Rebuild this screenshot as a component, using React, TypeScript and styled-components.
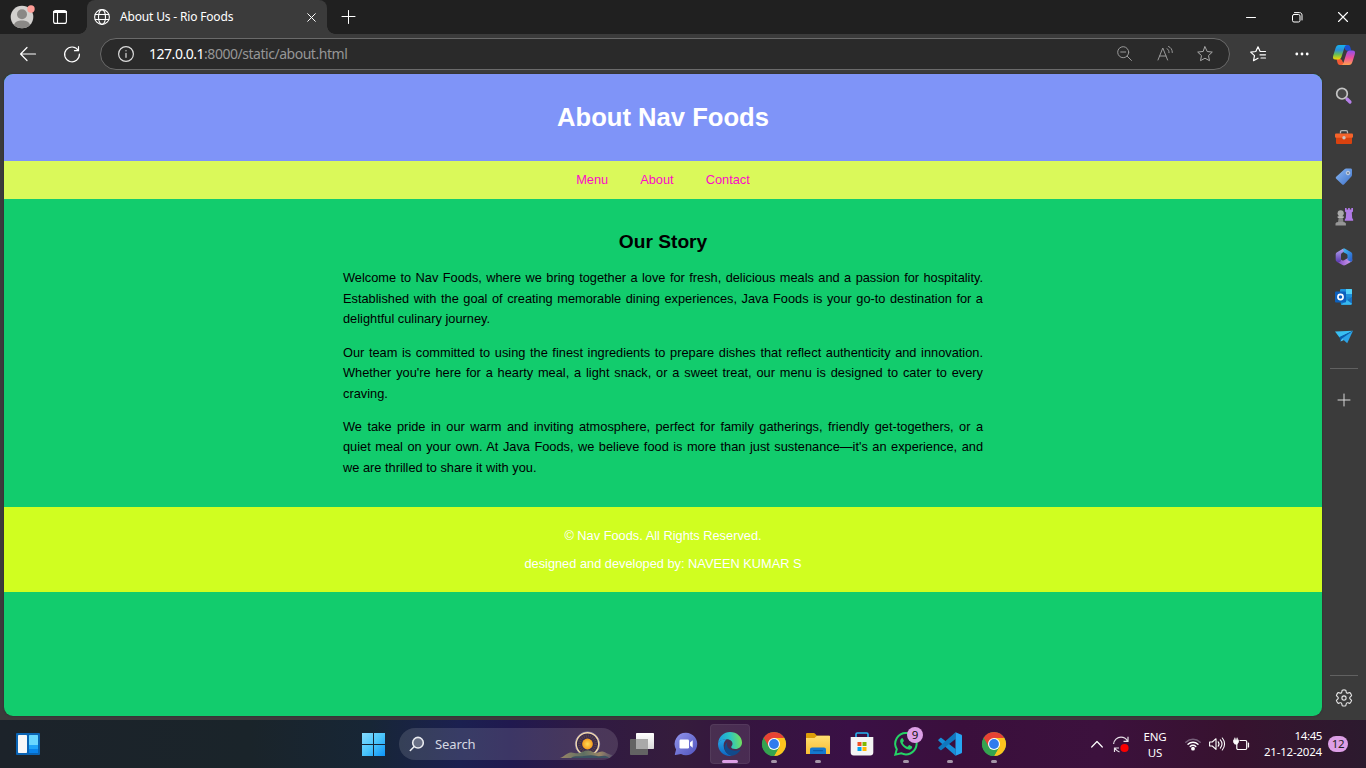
import React from "react";
import styled, { createGlobalStyle } from "styled-components";

const GlobalStyle = createGlobalStyle`
  *, *::before, *::after { box-sizing: border-box; }
  html, body { margin: 0; padding: 0; overflow: hidden; background: #3b3b3b; }
  svg { display: block; flex: none; overflow: visible; }
`;

const uiFont = `"Noto Sans", "Open Sans", sans-serif`;

const Screen = styled.div`
  width: 1366px;
  height: 768px;
  display: flex;
  flex-direction: column;
  background: #3b3b3b;
  color: #fff;
  font-family: ${uiFont};
  overflow: hidden;
`;

/* ---------- window frame ---------- */

const TitleBar = styled.div`
  height: 34px;
  flex: none;
  display: flex;
  align-items: stretch;
  background: #202020;
`;

const Slot = styled.div<{ $w: number; $color?: string }>`
  width: ${(p) => p.$w}px;
  flex: none;
  display: flex;
  align-items: center;
  justify-content: center;
  color: ${(p) => p.$color || "#fff"};
`;

const Tab = styled.div`
  position: relative;
  width: 240px;
  flex: none;
  display: flex;
  align-items: center;
  padding: 0 8px 0 7px;
  background: #3b3b3b;
  border-radius: 8px 8px 0 0;
  &::before,
  &::after {
    content: "";
    position: absolute;
    bottom: 0;
    width: 8px;
    height: 8px;
  }
  &::before {
    left: -8px;
    background: radial-gradient(circle at 0 0, transparent 7.5px, #3b3b3b 8px);
  }
  &::after {
    right: -8px;
    background: radial-gradient(circle at 100% 0, transparent 7.5px, #3b3b3b 8px);
  }
`;

const TabTitle = styled.span`
  flex: 1;
  margin-left: 10px;
  font-size: 12px;
  letter-spacing: -0.17px;
  line-height: 16px;
  white-space: nowrap;
`;

const Spacer = styled.div`
  flex: 1;
`;

const Body = styled.div`
  flex: 1;
  min-height: 0;
  display: flex;
`;

const Main = styled.div`
  width: 1322px;
  display: flex;
  flex-direction: column;
`;

const Toolbar = styled.div`
  height: 40px;
  flex: none;
  display: flex;
  align-items: center;
  padding-left: 6px;
`;

const AddressBar = styled.div`
  width: 1130px;
  height: 32px;
  flex: none;
  margin-left: 6px;
  margin-right: 6px;
  display: flex;
  align-items: center;
  padding: 0 4px 0 5px;
  background: #2a2a2a;
  border: 1px solid #6a6a6a;
  border-radius: 16px;
`;

const Url = styled.span`
  flex: 1;
  margin-left: 3px;
  font-size: 14px;
  letter-spacing: -0.47px;
  line-height: 20px;
  color: #969696;
  white-space: nowrap;
  b {
    font-weight: 400;
    color: #fff;
  }
`;

const Sidebar = styled.div`
  width: 44px;
  flex: none;
  display: flex;
  flex-direction: column;
  align-items: center;
`;

const SideItem = styled.div<{ $h?: number }>`
  width: 44px;
  height: ${(p) => p.$h || 40}px;
  flex: none;
  display: flex;
  align-items: center;
  justify-content: center;
`;

const SideRule = styled.div`
  width: 28px;
  height: 1px;
  flex: none;
  background: #616161;
`;

/* ---------- web page ---------- */

const Page = styled.div`
  margin: 0 0 4px 4px;
  flex: 1;
  display: flex;
  flex-direction: column;
  background: #12cc6d;
  border-radius: 9px;
  overflow: hidden;
  font-family: "Liberation Sans", Arial, sans-serif;
  font-size: 12.8px;
  line-height: 20.48px;
  color: #000;
  box-shadow: 0 0 2px #2a2a2a;
`;

const PageHeader = styled.header`
  height: 87px;
  display: flex;
  align-items: center;
  justify-content: center;
  background: #7f94f8;
  h1 {
    margin: 0;
    font-size: 25.6px;
    line-height: 41px;
    color: #fff;
  }
`;

const PageNav = styled.nav`
  height: 38px;
  display: flex;
  align-items: center;
  justify-content: center;
  gap: 32px;
  background: #daf95a;
  a {
    color: #fb0ac8;
  }
`;

const Article = styled.main`
  height: 308px;
  width: 640px;
  margin: 0 auto;
  padding-top: 27.6px;
  h2 {
    margin: 0 0 11.2px;
    font-size: 19.2px;
    line-height: 30.7px;
    text-align: center;
  }
  p {
    margin: 0 0 12.8px;
    text-align: justify;
  }
`;

const PageFooter = styled.footer`
  height: 85px;
  display: flex;
  flex-direction: column;
  align-items: center;
  justify-content: center;
  gap: 7.6px;
  padding-top: 2px;
  background: #d0fe20;
  color: #fff;
`;

/* ---------- taskbar ---------- */

const Taskbar = styled.div`
  height: 48px;
  flex: none;
  display: flex;
  align-items: stretch;
  background: linear-gradient(
    90deg,
    #1c232a 0,
    #1a242a 250px,
    #172636 370px,
    #1b2050 460px,
    #20194f 510px,
    #301a42 590px,
    #351c3c 680px,
    #35153f 740px,
    #3a1045 850px,
    #3a0f3c 960px,
    #3c113d 1100px,
    #37122f 1230px,
    #2c1a2e 1366px
  );
`;

const SearchBox = styled.div`
  width: 219px;
  height: 32px;
  margin: 8px 2px 8px 3px;
  flex: none;
  display: flex;
  align-items: center;
  padding-left: 10px;
  padding-right: 5px;
  border-radius: 16px;
  background: rgba(255, 255, 255, 0.13);
  font-size: 13px;
  color: #d5d8e2;
  overflow: hidden;
  span {
    flex: 1;
    margin-left: 10px;
    letter-spacing: -0.1px;
  }
`;

const AppTile = styled.div<{ $active?: boolean }>`
  position: relative;
  width: 40px;
  height: 40px;
  margin: 4px 2px;
  flex: none;
  display: flex;
  align-items: center;
  justify-content: center;
  border-radius: 4px;
  background: ${(p) => (p.$active ? "rgba(255,255,255,.1)" : "transparent")};
  border: 1px solid ${(p) => (p.$active ? "rgba(255,255,255,.06)" : "transparent")};
`;

const Running = styled.i<{ $active?: boolean }>`
  position: absolute;
  left: 50%;
  bottom: 0;
  width: ${(p) => (p.$active ? 16 : 6)}px;
  height: 3px;
  transform: translateX(-50%);
  border-radius: 2px;
  background: ${(p) => (p.$active ? "#dd9fe6" : "#a596a8")};
`;

const Badge = styled.span`
  position: absolute;
  top: 2px;
  right: 2px;
  width: 16px;
  height: 16px;
  border-radius: 8px;
  background: #dd9fe6;
  color: #111;
  font-size: 11.5px;
  line-height: 16px;
  text-align: center;
`;

const Language = styled.div`
  width: 44px;
  margin-right: 4px;
  display: flex;
  flex-direction: column;
  justify-content: center;
  padding-top: 1px;
  text-align: center;
  font-size: 11.5px;
  letter-spacing: -0.1px;
  line-height: 16px;
`;

const Clock = styled.div`
  width: 69px;
  display: flex;
  flex-direction: column;
  justify-content: center;
  text-align: right;
  white-space: nowrap;
  font-size: 11.5px;
  letter-spacing: -0.2px;
  line-height: 16px;
  span:first-child {
    letter-spacing: -0.4px;
  }
`;

const Count = styled.div`
  width: 20px;
  height: 16px;
  margin: 16px 18px 0 6px;
  border-radius: 8px;
  background: #dd9fe6;
  color: #222;
  font-size: 11.5px;
  letter-spacing: -0.4px;
  line-height: 16px;
  text-align: center;
`;

/* ---------- icons ---------- */

type LineProps = { w: number; h?: number; sw?: number; children: React.ReactNode };

const Line = ({ w, h = w, sw = 1, children }: LineProps) => (
  <svg
    width={w}
    height={h}
    viewBox={`0 0 ${w} ${h}`}
    fill="none"
    stroke="currentColor"
    strokeWidth={sw}
    strokeLinecap="round"
    strokeLinejoin="round"
  >
    {children}
  </svg>
);

const Avatar = () => (
  <svg width="24" height="24" viewBox="0 0 24 24">
    <circle cx="12" cy="12" r="11.3" fill="#d2d0ce" />
    <circle cx="12" cy="9.3" r="5" fill="#8a8886" />
    <path d="M4 20c1-3.2 4-4.4 8-4.4s7 1.200 8 4.400a11.300 11.300 0 0 1-16 0z" fill="#8a8886" />
    <circle cx="21" cy="4" r="3.700" fill="#ff9d97" />
  </svg>
);

const TabActions = () => (
  <Line w={14} sw={1.1}>
    <rect x=".6" y=".6" width="12.800" height="12.800" rx="2" />
    <path d="M1 2h12" strokeWidth="2.200" />
    <path d="M4.500 3v10" />
  </Line>
);

const Globe = () => (
  <Line w={16} sw={1.1}>
    <circle cx="8" cy="8" r="7.400" />
    <ellipse cx="8" cy="8" rx="3.500" ry="7.400" />
    <path d="M1.200 5.500h13.600M1.200 10.500h13.600" />
  </Line>
);

const Copilot = () => (
  <svg width="24" height="24" viewBox="0 0 24 24">
    <defs>
      <linearGradient id="cpA" x1="0" y1="0" x2="0" y2="1">
        <stop offset="0" stopColor="#14b4ef" />
        <stop offset=".35" stopColor="#2d8fd8" />
        <stop offset=".65" stopColor="#69bd55" />
        <stop offset="1" stopColor="#f5d800" />
      </linearGradient>
      <linearGradient id="cpB" x1="0" y1="0" x2="0" y2="1">
        <stop offset="0" stopColor="#8e50ee" />
        <stop offset=".5" stopColor="#ec4f9c" />
        <stop offset="1" stopColor="#ffa14d" />
      </linearGradient>
    </defs>
    <path d="M11 2h5c1.400 0 2 1 2.400 2.500l1 3.200h-4c-2 0-2.500-1.500-3-3z" fill="#1c4fd1" />
    <path d="M13 22H8c-1.600 0-2.200-1-2.600-2.500L4.500 16H8c1.500 0 2 1 2.500 2.500z" fill="#f15a35" />
    <path d="M7 2h8c-1.500 0-2.200 1.300-2.700 3l-2.700 8.500c-.6 2-1.500 3-3.300 3H3.500C1 16.500.6 15 1.200 12.700L3.600 5C4.200 3 5.300 2 7 2z" fill="url(#cpA)" />
    <path d="M17 22H9c1.500 0 2.200-1.300 2.700-3l2.700-8.500c.6-2 1.500-3 3.300-3h2.800c2.500 0 2.900 1.500 2.300 3.800L20.400 19c-.6 2-1.700 3-3.400 3z" fill="url(#cpB)" />
  </svg>
);

const SideSearch = () => (
  <svg width="18" height="18" viewBox="0 0 18 18">
    <path d="M12 12l3 3" stroke="#b57fe8" strokeWidth="3.200" strokeLinecap="round" />
    <circle cx="7" cy="6.700" r="5.300" fill="#474747" stroke="#c4c4c4" strokeWidth="1.700" />
  </svg>
);

const Toolbox = () => (
  <svg width="18" height="16" viewBox="0 0 18 16">
    <path d="M5.500 4.500V3c0-.8.500-1.300 1.300-1.300h4.400c.8 0 1.300.5 1.300 1.300v1.500" fill="none" stroke="#b6b6b6" strokeWidth="1.300" />
    <rect x="1" y="6" width="16" height="9" rx="1" fill="#d9420f" />
    <rect x="0" y="4.500" width="18" height="4.300" rx="1" fill="#f4632b" />
    <circle cx="9" cy="8.800" r="1.700" fill="#c9c3c1" />
  </svg>
);

const PriceTag = () => (
  <svg width="18" height="18" viewBox="0 0 18 18">
    <defs>
      <linearGradient id="tag" x1="0" y1="0" x2="1" y2="1">
        <stop offset="0" stopColor="#8ab9f5" />
        <stop offset="1" stopColor="#3f72c9" />
      </linearGradient>
    </defs>
    <path d="M9.500 1.200c.5-.500 1-.700 1.600-.700h4.400c1 0 1.500.5 1.500 1.500v5c0 .6-.2 1.100-.6 1.600l-7.200 7.700c-.7.700-1.500.7-2.200 0L1.200 10.800c-.6-.6-.6-1.400 0-2z" fill="url(#tag)" />
    <circle cx="13" cy="5" r="1.800" fill="#26384f" stroke="#dfe9f6" strokeWidth=".8" />
    <path d="M13 3.200v3.600M11.200 5h3.600" stroke="#dfe9f6" strokeWidth=".6" />
  </svg>
);

const Games = () => (
  <svg width="18" height="18" viewBox="0 0 18 18">
    <path d="M10 0h1.600v1.500h1.500V0h1.700v1.500h1.500V0H18v3.500l-1.200 1 .4 5.500 1 1.800c.2.500 0 1-.6 1h-7.200c-.6 0-.8-.5-.6-1l1-1.800.4-5.500-1.200-1z" fill="#b17ae6" />
    <path d="M4.200 7h3l1.300 7H3z" fill="#858585" />
    <circle cx="5.700" cy="5.300" r="3.100" fill="#a9a9a9" />
    <rect x="2.400" y="8.200" width="6.600" height="1.700" rx=".8" fill="#b4b4b4" />
    <path d="M.5 17.500v-1.800c0-1.200 1.500-2 5.200-2s5.200.8 5.200 2v1.800z" fill="#969696" />
  </svg>
);

const M365 = () => (
  <svg width="18" height="18" viewBox="0 0 18 18">
    <defs>
      <linearGradient id="m1" x1="0" y1="0" x2="1" y2="1">
        <stop offset="0" stopColor="#3fc0f3" />
        <stop offset="1" stopColor="#2a57c9" />
      </linearGradient>
      <linearGradient id="m2" x1="0" y1="0" x2="0" y2="1">
        <stop offset="0" stopColor="#b5a4f0" />
        <stop offset="1" stopColor="#5a3ab0" />
      </linearGradient>
      <linearGradient id="m3" x1="0" y1="0" x2="1" y2="0">
        <stop offset="0" stopColor="#7b46c4" />
        <stop offset="1" stopColor="#d9a4ee" />
      </linearGradient>
    </defs>
    <path d="M8 .7L2 4.200C1 4.800.7 5.600.7 6.700v5c0 1 .5 1.800 1.500 2.300 2.300.6 3.800-.5 3.800-2.500V6.800c0-.8.300-1.300 1-1.700l3-2z" fill="url(#m2)" />
    <path d="M2.200 14l5.300 3c1 .6 2 .6 3 0l5.300-3c1-.6 1.500-1.400 1.500-2.300L13 10l-4 2.300c-.7.400-1.300.4-2 0L6 11.500C6 13.500 4.500 14.600 2.200 14z" fill="url(#m3)" />
    <path d="M8 .7c.7-.3 1.700-.2 2.500.3l5.300 3c1 .6 1.500 1.400 1.500 2.500v5.200c0 1-.5 1.700-1.300 2.200L12.500 12V7.200c0-.6-.3-1-.8-1.300L8.500 4.200C9 3 8.800 1.800 8 .7z" fill="url(#m1)" />
  </svg>
);

const Outlook = () => (
  <svg width="18" height="16" viewBox="0 0 18 16">
    <rect x="5" y="0" width="12" height="9" rx="1" fill="#1d8fdb" />
    <path d="M11 0h5c.6 0 1 .4 1 1v4h-6z" fill="#50d0f8" />
    <path d="M5 8h12v6.500c0 .7-.5 1.200-1.200 1.200H6z" fill="#1688d5" />
    <path d="M17 7.500v7c0 .7-.5 1.200-1.200 1.200H6z" fill="#38b9ef" />
    <path d="M17 7.500v7.200L12 11z" fill="#176fc0" />
    <rect x="0" y="2.500" width="11" height="11" rx="1" fill="#0c60bd" />
    <circle cx="5.500" cy="8" r="2.600" fill="none" stroke="#fff" strokeWidth="1.600" />
  </svg>
);

const Send = () => (
  <svg width="18" height="14" viewBox="0 0 18 14">
    <path d="M0 1.500L18 .8 4.500 7.500z" fill="#38bff2" />
    <path d="M4.500 7L18 .8 5.500 11.500z" fill="#0a5eae" />
    <path d="M7 8.500L18 .8l-5.800 12.400z" fill="#2aa3e8" />
    <path d="M5.500 11.500l1.500-3 2 1.500z" fill="#56c7f4" />
  </svg>
);

const Gear = () => (
  <svg width="18" height="18" viewBox="0 0 17 18" fill="none" stroke="#e6e6e6" strokeWidth="1.100" strokeLinejoin="round">
    <path d="M6.700 1.200c1.200-.4 2.400-.4 3.600 0l.5 2.100c.2.700.8 1 1.500.8l2-.6c.9.900 1.500 2 1.800 3.100l-1.500 1.500c-.5.500-.5 1.200 0 1.700l1.500 1.500c-.3 1.200-.9 2.200-1.800 3.100l-2-.6c-.7-.2-1.300.1-1.500.8l-.5 2.100c-1.200.4-2.400.4-3.600 0l-.5-2.100c-.2-.7-.8-1-1.500-.8l-2 .6C1.800 13.500 1.200 12.500.900 11.300l1.500-1.500c.5-.5.500-1.200 0-1.700L.9 6.600c.3-1.200.9-2.200 1.800-3.100l2 .6c.7.2 1.300-.1 1.500-.8z" />
    <circle cx="8.500" cy="9" r="2.100" />
  </svg>
);

const Widgets = () => (
  <svg width="24" height="22" viewBox="0 0 24 22">
    <rect width="24" height="22" rx="1" fill="#0a64b4" />
    <rect x="2" y="2" width="9" height="18" rx=".8" fill="#f8f8f8" />
    <rect x="13" y="2" width="9" height="10" rx=".5" fill="#69d6ff" />
    <rect x="13" y="12" width="9" height="4" fill="#1fa3f8" />
    <rect x="13" y="16" width="9" height="4" fill="#0883ec" />
  </svg>
);

const Start = () => (
  <svg width="23" height="23" viewBox="0 0 23 23">
    <defs>
      <linearGradient id="win" x1="0" y1="0" x2="1" y2="1">
        <stop offset="0" stopColor="#86dcff" />
        <stop offset=".5" stopColor="#4bc5fb" />
        <stop offset="1" stopColor="#0c94f8" />
      </linearGradient>
    </defs>
    <path d="M0 0h11v11H0zM12 0h11v11H12zM0 12h11v11H0zM12 12h11v11H12z" fill="url(#win)" />
  </svg>
);

const SearchArt = () => (
  <svg width="52" height="32" viewBox="0 0 52 32">
    <defs>
      <linearGradient id="hill" x1="0" y1="0" x2="1" y2="0">
        <stop offset="0" stopColor="#9b8767" />
        <stop offset=".45" stopColor="#5e6f62" />
        <stop offset=".75" stopColor="#9b8767" />
        <stop offset="1" stopColor="#56506a" />
      </linearGradient>
      <radialGradient id="sun">
        <stop offset="0" stopColor="#ffdb55" />
        <stop offset="1" stopColor="#f49a1e" />
      </radialGradient>
    </defs>
    <circle cx="26.500" cy="16" r="12.200" fill="#392b50" stroke="#7e78a8" strokeWidth="1" />
    <circle cx="26.500" cy="16" r="11.300" fill="none" stroke="#f2d7ac" strokeWidth="1.400" />
    <circle cx="26.500" cy="16" r="8" fill="none" stroke="#5d4545" strokeWidth="3" strokeDasharray="1 1.100" />
    <circle cx="26.500" cy="16" r="5.400" fill="url(#sun)" />
    <path d="M-1 30c4-1 6-5 11-5.500 3-.2 5 1.500 8 .5 4-1 6-3 9.500-2.500 4 .6 5 2.500 8 2.200 3-.3 4-1.800 7-1 3 .8 4 2.500 9 3.300L49 30z" fill="url(#hill)" />
    <path d="M10 30c4-3 8-1 13-2s9-1 13 0 8-2 12 2z" fill="#3c5262" />
  </svg>
);

const TaskView = () => (
  <svg width="24" height="22" viewBox="0 0 24 22">
    <defs>
      <linearGradient id="tv" x1="0" y1="0" x2="0" y2="1">
        <stop offset="0" stopColor="#fff" />
        <stop offset="1" stopColor="#d9d9d9" />
      </linearGradient>
    </defs>
    <rect x="6" y="0" width="18" height="16" rx=".7" fill="url(#tv)" />
    <rect x="0" y="6" width="18" height="16" rx=".7" fill="#636363" />
    <rect x="6" y="6" width="12" height="10" fill="#a9a9a9" />
  </svg>
);

const Chat = () => (
  <svg width="24" height="24" viewBox="0 0 24 24">
    <defs>
      <linearGradient id="chat" x1="0" y1="0" x2="1" y2="1">
        <stop offset="0" stopColor="#9295ec" />
        <stop offset="1" stopColor="#5053bd" />
      </linearGradient>
    </defs>
    <path d="M12 .8A11.200 11.200 0 1 1 7 22l-5.500 1c-.6 0-.8-.4-.6-1l1.200-4.500A11.200 11.200 0 0 1 12 .8z" fill="url(#chat)" />
    <rect x="5.500" y="7.500" width="9.500" height="9" rx="1.200" fill="#fff" />
    <path d="M16 10.500L18.700 8.200v7.600L16 13.500z" fill="#fff" />
  </svg>
);

const Edge = () => (
  <svg width="24" height="24" viewBox="0 0 24 24">
    <defs>
      <linearGradient id="e1" x1="0" y1=".5" x2="1" y2=".4">
        <stop offset="0" stopColor="#1d9be0" />
        <stop offset=".5" stopColor="#2bc3c4" />
        <stop offset="1" stopColor="#74e158" />
      </linearGradient>
      <linearGradient id="e2" x1="0" y1="0" x2="0" y2="1">
        <stop offset="0" stopColor="#28a6e4" />
        <stop offset="1" stopColor="#0c66c2" />
      </linearGradient>
    </defs>
    <path d="M.2 10.500C1 4.500 6 0 12 0c7 0 12 5 12 10.500 0 4-3 6.500-6.800 6.500-2.700 0-4-1-4-2 0-.7 1.300-1.200 1.300-3.200 0-2.300-2.200-4.500-5.500-4.500C4.500 7.300 1.500 9 .2 10.500z" fill="url(#e1)" />
    <path d="M.2 10.500C1.500 8.500 4.500 7 8.500 7.200c-2.500 2-3.500 5-2.500 9 .8 3.500 4 6.500 8 7.500C6.500 25 0 19.500 0 12z" fill="url(#e2)" />
    <path d="M9.600 10C6.500 12 6 15.500 7.200 18.500c1.200 3 4 5 7 5.200 3.500-.6 6.200-2.500 8-5.200.4-.6 0-.9-.6-.7-5.500 2.300-12.500-.3-12.600-5 0-1.200.2-2 .6-2.800z" fill="#114a8b" />
  </svg>
);

const Chrome = () => (
  <svg width="24" height="24" viewBox="0 0 24 24">
    <circle cx="12" cy="12" r="12" fill="#34a350" />
    <path d="M12 12L1.600 6A12 12 0 0 1 22.400 6z" fill="#e74234" />
    <path d="M12 6h10.400A12 12 0 0 1 12 24l5.200-9z" fill="#fcc31e" />
    <path d="M1.600 6L6.800 15 12 12V6z" fill="#e74234" />
    <path d="M1.600 6A12 12 0 0 0 12 24l5.200-9-5.200-1-5.200 1z" fill="#34a350" />
    <circle cx="12" cy="12" r="6" fill="#fff" />
    <circle cx="12" cy="12" r="4.900" fill="#2f7bee" />
  </svg>
);

const Folder = () => (
  <svg width="24" height="22" viewBox="0 0 24 22">
    <defs>
      <linearGradient id="fold" x1="0" y1="0" x2="0" y2="1">
        <stop offset="0" stopColor="#ffdf72" />
        <stop offset="1" stopColor="#f9bd33" />
      </linearGradient>
    </defs>
    <path d="M0 1.200C0 .500.500 0 1.200 0h6.500c.5 0 .9.200 1.200.5L11 2.800h12c.6 0 1 .4 1 1V10H0z" fill="#dd9d08" />
    <path d="M0 5h8.500L11 2.800h12c.6 0 1 .4 1 1V21H0z" fill="url(#fold)" />
    <path d="M4 21v-4.500c0-1.200.8-2 2-2h12c1.200 0 2 .8 2 2V21z" fill="#1478cf" />
    <rect x="7" y="17" width="10" height="1.200" rx=".6" fill="#0c5aa8" />
  </svg>
);

const Store = () => (
  <svg width="24" height="24" viewBox="0 0 24 24">
    <path d="M6 6V2.300c0-.7.500-1.300 1.300-1.300h9.400c.8 0 1.300.5 1.300 1.300V6" fill="none" stroke="#25b4f0" strokeWidth="1.600" />
    <path d="M.7 5h22.600v15.500c0 1.800-1.200 3-3 3H3.700c-1.800 0-3-1.200-3-3z" fill="#f4f4f4" />
    <rect x="7.500" y="10" width="4" height="4" fill="#f25022" />
    <rect x="12.500" y="10" width="4" height="4" fill="#7fba00" />
    <rect x="7.500" y="15" width="4" height="4" fill="#00a4ef" />
    <rect x="12.500" y="15" width="4" height="4" fill="#ffb900" />
  </svg>
);

const WhatsApp = () => (
  <svg width="24" height="24" viewBox="0 0 24 24">
    <path d="M12.200 1A10.700 10.700 0 1 1 7 21.200L1.300 22.700l1.500-5.500A10.700 10.700 0 0 1 12.200 1z" fill="none" stroke="#25d366" strokeWidth="2" />
    <path d="M8.200 6.300c-.4 0-1 .1-1.500.9-1 1.400-.6 3.300.8 5.300 1.700 2.600 4.200 4.700 7.200 5.100 1.600.2 3.200-.7 3.500-2.400.1-.6 0-.7-.5-1l-2.100-1c-.4-.2-.6-.1-.9.300l-.8 1c-.3.300-.5.300-.9.200-1.800-.7-3.200-1.900-4.200-3.600-.2-.4-.1-.6.200-.9l.7-.9c.2-.3.200-.5.100-.8l-.9-2c-.1-.3-.4-.3-.7-.2z" fill="#25d366" />
  </svg>
);

const Code = () => (
  <svg width="24" height="24" viewBox="0 0 24 24">
    <path d="M17.500 23.800V17L3.500 6c-.4-.3-.9-.3-1.200 0L.5 7.500c-.4.400-.4.900 0 1.200z" fill="#168fd8" />
    <path d="M17.500.3V7L3.500 18c-.4.300-.9.300-1.200 0L.5 16.500c-.4-.4-.4-.9 0-1.200z" fill="#0f78bf" />
    <path d="M17.500.300L23.500 2.800c.3.200.5.500.5.900v16.600c0 .4-.2.700-.5.900l-6 2.600z" fill="#26a6f2" />
  </svg>
);

type AppButtonProps = { active?: boolean; running?: boolean; badge?: string; children: React.ReactNode };

const AppButton = ({ active, running, badge, children }: AppButtonProps) => (
  <AppTile $active={active}>
    {children}
    {running && <Running $active={active} />}
    {badge && <Badge>{badge}</Badge>}
  </AppTile>
);

/* ---------- page ---------- */

const story = [
  "Welcome to Nav Foods, where we bring together a love for fresh, delicious meals and a passion for hospitality. Established with the goal of creating memorable dining experiences, Java Foods is your go-to destination for a delightful culinary journey.",
  "Our team is committed to using the finest ingredients to prepare dishes that reflect authenticity and innovation. Whether you're here for a hearty meal, a light snack, or a sweet treat, our menu is designed to cater to every craving.",
  "We take pride in our warm and inviting atmosphere, perfect for family gatherings, friendly get-togethers, or a quiet meal on your own. At Java Foods, we believe food is more than just sustenance—it's an experience, and we are thrilled to share it with you.",
];

const starPath = "M8 .8l2.200 4.700 5.100.6-3.800 3.500 1 5.100L8 12.200l-4.500 2.500 1-5.100L.7 6.100l5.100-.6z";

export default function App() {
  return (
    <Screen>
      <GlobalStyle />
      <TitleBar>
        <Slot $w={44}><Avatar /></Slot>
        <Slot $w={32}><TabActions /></Slot>
        <Slot $w={11} />
        <Tab>
          <Globe />
          <TabTitle>About Us - Rio Foods</TabTitle>
          <Slot $w={16}>
            <Line w={9}><path d="M.7.7l7.600 7.600M8.300.7L.7 8.300" /></Line>
          </Slot>
        </Tab>
        <Slot $w={42}>
          <Line w={14}><path d="M7.500.5v13M1 6.500h13" /></Line>
        </Slot>
        <Spacer />
        <Slot $w={46}><Line w={10}><path d="M.5 5.500h9" /></Line></Slot>
        <Slot $w={46}>
          <Line w={10}>
            <rect x=".5" y="2.500" width="7.500" height="7.500" rx="1.500" />
            <path d="M2.500 .6h5c1.500 0 2.500 1 2.500 2.500V8" />
          </Line>
        </Slot>
        <Slot $w={46}><Line w={10} sw={1.1}><path d="M.5.5l9 9M9.500.5l-9 9" /></Line></Slot>
      </TitleBar>

      <Body>
        <Main>
          <Toolbar>
            <Slot $w={44}>
              <Line w={16} sw={1.2}><path d="M15.500 8H.7M7 1.500L.6 8 7 14.500" /></Line>
            </Slot>
            <Slot $w={44}>
              <Line w={16} sw={1.2}><path d="M14.300 4.500A7.400 7.400 0 1 0 15.400 8M14.500 .7v4h-4" /></Line>
            </Slot>
            <AddressBar>
              <Slot $w={40} $color="#dcdcdc">
                <Line w={16} sw={1.2}><circle cx="8" cy="8" r="7.400" /><path d="M8 7.300v4M8 4.700v.1" /></Line>
              </Slot>
              <Url><b>127.0.0.1</b>:8000/static/about.html</Url>
              <Slot $w={40} $color="#9a9a9a">
                <Line w={16}><circle cx="6.200" cy="6.200" r="5.500" /><path d="M10.200 10.200l4.300 4.300M3.700 6h5" /></Line>
              </Slot>
              <Slot $w={40} $color="#9a9a9a">
                <Line w={16} h={16}>
                  <path d="M1 14L5.800 2l4.800 12M2.700 10h6.300M10 2.700c1.500 .8 2 2 2 4M11.500 .5c2.500 1 3.800 3 3.800 6" />
                </Line>
              </Slot>
              <Slot $w={40} $color="#a8a8a8">
                <Line w={16}><path d={starPath} /></Line>
              </Slot>
            </AddressBar>
            <Slot $w={44}>
              <Line w={16} sw={1.2}>
                <path d="M10 5.200L8 .8 5.800 5.500.7 6.100l3.800 3.500-1 5.100L8 12.200M10.500 5.500H15.500M10 8.800h5.500M11 12h4.500" />
              </Line>
            </Slot>
            <Slot $w={44}>
              <svg width="14" height="4" viewBox="0 0 14 4" fill="#fff">
                <circle cx="1.800" cy="2" r="1.400" /><circle cx="7" cy="2" r="1.400" /><circle cx="12.200" cy="2" r="1.400" />
              </svg>
            </Slot>
          </Toolbar>

          <Page>
            <PageHeader><h1>About Nav Foods</h1></PageHeader>
            <PageNav><a>Menu</a><a>About</a><a>Contact</a></PageNav>
            <Article>
              <h2>Our Story</h2>
              {story.map((text) => <p key={text}>{text}</p>)}
            </Article>
            <PageFooter>
              <span>© Nav Foods. All Rights Reserved.</span>
              <span>designed and developed by: NAVEEN KUMAR S</span>
            </PageFooter>
          </Page>
        </Main>

        <Sidebar>
          <SideItem $h={41}><Copilot /></SideItem>
          <SideItem $h={42}><SideSearch /></SideItem>
          <SideItem><Toolbox /></SideItem>
          <SideItem><PriceTag /></SideItem>
          <SideItem><Games /></SideItem>
          <SideItem><M365 /></SideItem>
          <SideItem><Outlook /></SideItem>
          <SideItem><Send /></SideItem>
          <SideItem $h={11} />
          <SideRule />
          <SideItem $h={63}>
            <Line w={13}><path d="M6 0v12M0 6h12" stroke="#d8d8d8" /></Line>
          </SideItem>
          <Spacer />
          <SideRule />
          <SideItem $h={44}><Gear /></SideItem>
        </Sidebar>
      </Body>

      <Taskbar>
        <Slot $w={56}><Widgets /></Slot>
        <Slot $w={295} />
        <Slot $w={45}><Start /></Slot>
        <SearchBox>
          <svg width="16" height="16" viewBox="0 0 16 16" fill="rgba(255,255,255,.25)" stroke="#e9ebf0" strokeWidth="1.600" strokeLinecap="round">
            <circle cx="9" cy="6.700" r="5.300" /><path d="M5 10.700L1.300 14.500" />
          </svg>
          <span>Search</span>
          <SearchArt />
        </SearchBox>
        <AppButton><TaskView /></AppButton>
        <AppButton><Chat /></AppButton>
        <AppButton active running><Edge /></AppButton>
        <AppButton running><Chrome /></AppButton>
        <AppButton running><Folder /></AppButton>
        <AppButton><Store /></AppButton>
        <AppButton running badge="9"><WhatsApp /></AppButton>
        <AppButton running><Code /></AppButton>
        <AppButton running><Chrome /></AppButton>
        <Spacer />
        <Slot $w={24}><Line w={12} h={8} sw={1.2}><path d="M.7 7L6 1.500 11.300 7" /></Line></Slot>
        <Slot $w={24}>
          <svg width="16" height="17" viewBox="0 0 16 17" fill="none" stroke="#e6dfe7" strokeWidth="1.200">
            <path d="M.6 8C1 4.200 4 1.200 8 1.200c2.700 0 5 1.300 6.300 3.500M15 .8v4.500h-4.500M6.500 16C4.500 15.300 3 14 2 12.500M1.500 16v-4H6" />
            <circle cx="11.500" cy="12" r="4.100" fill="#fb0000" stroke="none" />
          </svg>
        </Slot>
        <Language><span>ENG</span><span>US</span></Language>
        <Slot $w={24}>
          <Line w={16} h={12} sw={1.4}>
            <path d="M.8 4.200C5 .2 11 .2 15.200 4.200" stroke="#77607a" />
            <path d="M3 6.300c2.800-2.800 7.200-2.800 10 0M5.200 8.500c1.600-1.600 4-1.600 5.600 0" />
            <circle cx="8" cy="10.700" r="1.200" fill="#fff" />
          </Line>
        </Slot>
        <Slot $w={24}>
          <Line w={16} h={14} sw={1.1}>
            <path d="M.6 5v4h2.700l3.700 3.300V1.700L3.300 5zM9.200 4.800c1 1.300 1 3.100 0 4.400M11.300 2.900c2 2.400 2 5.800 0 8.200M13.300 1c3 3.500 3 8.500 0 12" />
          </Line>
        </Slot>
        <Slot $w={24}>
          <Line w={16} h={13} sw={1.2}>
            <path d="M7 2.500h5.500c.7 0 1.200.5 1.200 1.200v6.600c0 .7-.5 1.200-1.200 1.200H5c-.7 0-1.200-.5-1.200-1.200V6M15.500 5v4" />
            <path d="M.8 2.200h4.400v2L3.700 6H2.300L.8 4.200zM1.900.2v2M4.100.2v2" fill="#fff" />
          </Line>
        </Slot>
        <Clock><span>14:45</span><span>21-12-2024</span></Clock>
        <Count>12</Count>
      </Taskbar>
    </Screen>
  );
}
